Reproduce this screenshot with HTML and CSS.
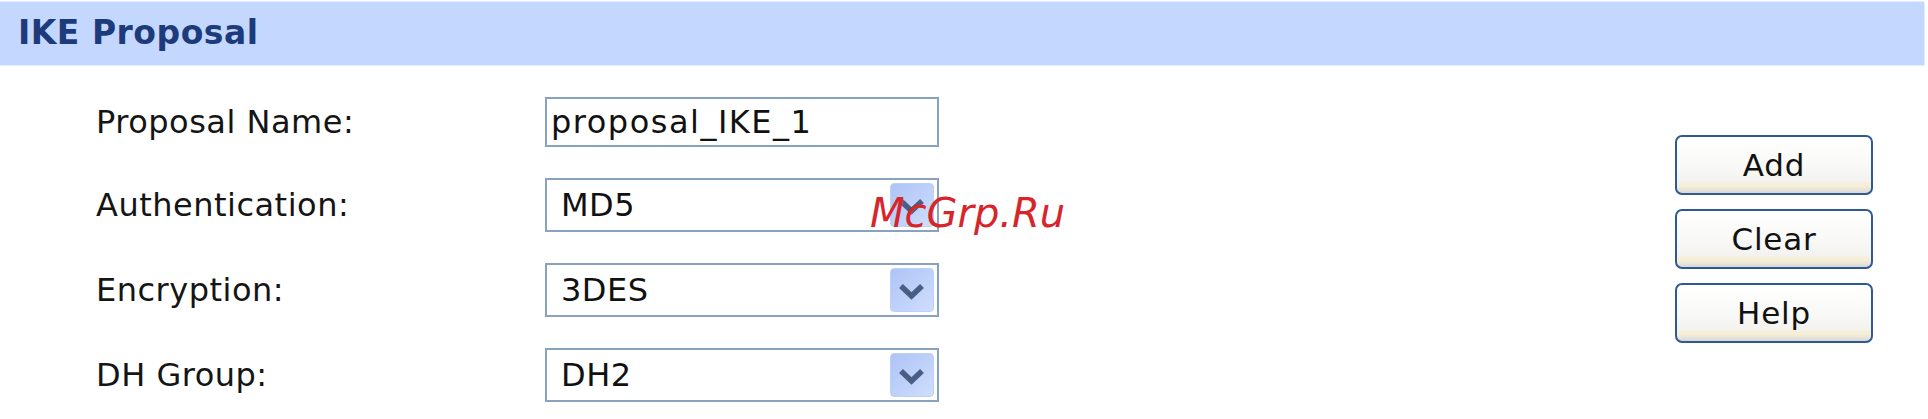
FILE: index.html
```html
<!DOCTYPE html>
<html lang="en">
<head>
<meta charset="utf-8">
<title>IKE Proposal</title>
<link rel="stylesheet" href="styles.css">
</head>
<body>
<div class="page">
  <div class="section-head">
    <h1 class="section-title">IKE Proposal</h1>
  </div>

  <div class="section-body">
    <div class="fields">
      <label class="field-label" for="proposal-name">Proposal Name:</label>
      <input class="text-input" id="proposal-name" type="text" value="proposal_IKE_1">

      <span class="field-label">Authentication:</span>
      <div class="combo">
        <span class="combo-value">MD5</span>
        <span class="combo-btn">
          <svg viewBox="0 0 44 44" width="44" height="44"><polyline points="11,18 21.5,28 32,18"/></svg>
        </span>
      </div>

      <span class="field-label">Encryption:</span>
      <div class="combo">
        <span class="combo-value">3DES</span>
        <span class="combo-btn">
          <svg viewBox="0 0 44 44" width="44" height="44"><polyline points="11,18 21.5,28 32,18"/></svg>
        </span>
      </div>

      <span class="field-label">DH Group:</span>
      <div class="combo">
        <span class="combo-value">DH2</span>
        <span class="combo-btn">
          <svg viewBox="0 0 44 44" width="44" height="44"><polyline points="11,18 21.5,28 32,18"/></svg>
        </span>
      </div>
    </div>

    <div class="actions">
      <button class="btn" type="button">Add</button>
      <button class="btn" type="button">Clear</button>
      <button class="btn" type="button">Help</button>
    </div>
  </div>

  <span class="watermark">McGrp.Ru</span>
</div>
</body>
</html>
```

FILE: styles.css
```css
html, body {
  margin: 0;
  padding: 0;
  background: #ffffff;
}

body {
  font-family: "DejaVu Sans", Verdana, sans-serif;
  color: #111111;
}

.page {
  position: relative;
  height: 419px;
  overflow: hidden;
}

/* blue section header */
.section-head {
  margin: 2px 4px 0 0;
  height: 63px;
  display: flex;
  align-items: center;
  padding-left: 18px;
  background: #c4d8ff;
  box-shadow: 0 -1px 0 #e2ecff, 0 1px 0 #e2ecff, 1px 0 0 #e2ecff;
}

.section-title {
  margin: 0;
  font-size: 33px;
  line-height: 1.164;
  font-weight: 700;
  letter-spacing: 0.5px;
  color: #1d3b7b;
}

/* form area */
.section-body {
  display: flex;
  align-items: flex-start;
  padding: 32px 55px 0 96px;
}

.fields {
  display: grid;
  grid-template-columns: 449px 394px;
  row-gap: 31px;
  align-items: center;
}

.field-label {
  font-size: 32px;
  line-height: 1.164;
  letter-spacing: 0.5px;
  padding-top: 2px;
  color: #151515;
}

.text-input {
  box-sizing: border-box;
  width: 394px;
  height: 50px;
  margin: 0;
  padding: 0 4px;
  border: 2px solid #88a2c0;
  font-family: "DejaVu Sans", Verdana, sans-serif;
  font-size: 32px;
  letter-spacing: 1.5px;
  color: #111111;
  background: #ffffff;
  outline: none;
}

.combo {
  box-sizing: border-box;
  height: 54px;
  display: flex;
  align-items: center;
  justify-content: space-between;
  padding: 0 3px 0 14px;
  border: 2px solid #88a2c0;
  background: #ffffff;
}

.combo-value {
  font-size: 32px;
  line-height: 1.164;
  letter-spacing: 0.5px;
  padding-top: 2px;
  color: #111111;
}

.combo-btn {
  box-sizing: border-box;
  width: 44px;
  height: 44px;
  border-radius: 4px;
  border: 1px solid #bdd0f7;
  background: linear-gradient(135deg, #aec4f5 0%, #bfd2fa 55%, #d0defd 100%);
  display: flex;
}

.combo-btn svg {
  display: block;
  margin: -1px;
}

.combo-btn polyline {
  fill: none;
  stroke: #4a5d84;
  stroke-width: 5.5;
  stroke-linejoin: miter;
}

/* button column */
.actions {
  margin-left: auto;
  padding-top: 38px;
  display: flex;
  flex-direction: column;
  gap: 14px;
}

.btn {
  box-sizing: border-box;
  width: 198px;
  height: 60px;
  margin: 0;
  padding: 0;
  border: 2px solid #2d5a94;
  border-radius: 7px;
  font-family: "DejaVu Sans", Verdana, sans-serif;
  font-size: 31px;
  letter-spacing: 0.8px;
  color: #111111;
  background:
    linear-gradient(to bottom,
      #ffffff 0%,
      #f8f8f6 55%,
      #f3f2ee 80%,
      #f6efd4 85%,
      #f6efd4 88%,
      #e8e6de 93%,
      #dad8d0 100%);
}

/* site watermark stamped over the form */
.watermark {
  position: absolute;
  left: 870px;
  top: 193px;
  font-size: 40px;
  line-height: 1;
  font-style: italic;
  color: #d7262b;
  white-space: nowrap;
}
```
